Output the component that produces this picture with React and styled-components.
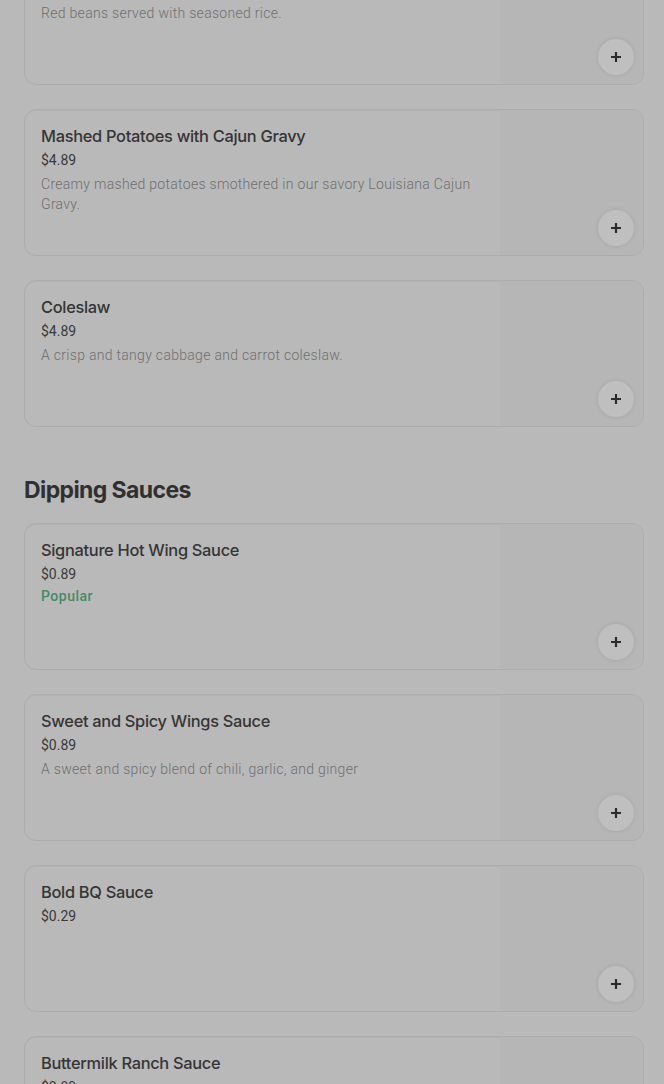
import React from 'react'
import styled, { createGlobalStyle } from 'styled-components'

const GlobalStyle = createGlobalStyle`
    html, body {
        margin: 0;
        padding: 0;
        background: #b9b9b9;
        font-family: Roboto, "Noto Sans", "Liberation Sans", sans-serif;
        overflow: hidden;
    }
`

const sides = [
    { name: 'Red Beans and Rice', price: '$4.89', desc: 'Red beans served with seasoned rice.' },
    { name: 'Mashed Potatoes with Cajun Gravy', price: '$4.89', desc: 'Creamy mashed potatoes smothered in our savory Louisiana Cajun Gravy.' },
    { name: 'Coleslaw', price: '$4.89', desc: 'A crisp and tangy cabbage and carrot coleslaw.' },
]

const sauces = [
    { name: 'Signature Hot Wing Sauce', price: '$0.89', popular: true },
    { name: 'Sweet and Spicy Wings Sauce', price: '$0.89', desc: 'A sweet and spicy blend of chili, garlic, and ginger' },
    { name: 'Bold BQ Sauce', price: '$0.29' },
    { name: 'Buttermilk Ranch Sauce', price: '$0.89' },
]

function PlusIcon() {
    return (
        <svg width="14" height="14" viewBox="0 0 14 14">
            <path d="M7 2v10M2 7h10" stroke="#2b2b2b" strokeWidth="2.2" />
        </svg>
    )
}

function Item({ item }) {
    return (
        <Card>
            <Info>
                <Name>{item.name}</Name>
                <Price>{item.price}</Price>
                {item.popular && <Popular>Popular</Popular>}
                {item.desc && <Desc>{item.desc}</Desc>}
            </Info>
            <Thumb>
                <AddButton aria-label="Add"><PlusIcon /></AddButton>
            </Thumb>
        </Card>
    )
}

function App() {
    return (
        <>
            <GlobalStyle />
            <Page>
                <List>
                    {sides.map(s => <Item key={s.name} item={s} />)}
                </List>
                <Section>
                    <Heading>Dipping Sauces</Heading>
                    <List>
                        {sauces.map(s => <Item key={s.name} item={s} />)}
                    </List>
                </Section>
            </Page>
        </>
    )
}

export default App

const Page = styled.div`
    margin-top: -62px;
    padding: 0 20px 0 24px;
`

const List = styled.div`
    display: flex;
    flex-direction: column;
    gap: 24px;
`

const Section = styled.section`
    margin-top: 47px;
`

const Heading = styled.h2`
    margin: 0 0 17px;
    font-family: Inter, "Liberation Sans", sans-serif;
    font-size: 23px;
    line-height: 32px;
    font-weight: 700;
    letter-spacing: -0.6px;
    color: #303030;
`

const Card = styled.div`
    box-sizing: border-box;
    height: 147px;
    display: flex;
    border: 1px solid #acacac;
    border-radius: 12px;
    overflow: hidden;
    box-shadow: inset 0 1px 0 #b2b2b2;
`

const Info = styled.div`
    flex: 1;
    padding: 15px 16px 0 16px;
    min-width: 0;
`

const Name = styled.div`
    font-family: Inter, Roboto, sans-serif;
    font-size: 16.4px;
    line-height: 22px;
    font-weight: 500;
    letter-spacing: -0.3px;
    color: #353535;
    margin-bottom: 3px;
`

const Price = styled.div`
    font-size: 14px;
    line-height: 20px;
    color: #3a3a3a;
`

const Desc = styled.div`
    margin-top: 4px;
    font-size: 14px;
    line-height: 20px;
    letter-spacing: 0.3px;
    color: #6f6f6f;
    font-weight: 300;
    max-width: 440px;
`

const Popular = styled.div`
    margin-top: 2px;
    font-size: 14px;
    line-height: 20px;
    font-weight: 500;
    letter-spacing: 0.5px;
    color: #468a67;
`

const Thumb = styled.div`
    position: relative;
    width: 143px;
    flex-shrink: 0;
    background: #b6b6b6;
`

const AddButton = styled.button`
    position: absolute;
    right: 9px;
    bottom: 9px;
    width: 36px;
    height: 36px;
    border-radius: 50%;
    border: none;
    padding: 0;
    display: flex;
    align-items: center;
    justify-content: center;
    background: #bfbfbf;
    box-shadow: 0 0 4px rgba(0, 0, 0, 0.1);
    cursor: pointer;
`
